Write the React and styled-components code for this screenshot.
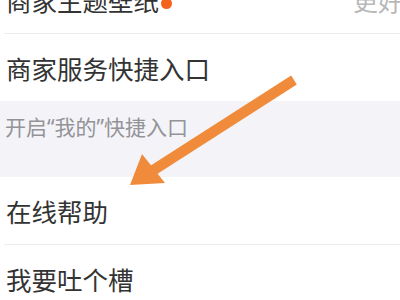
import React from "react";
import styled, { createGlobalStyle } from "styled-components";

const Global = createGlobalStyle`
  html, body { margin: 0; padding: 0; background: #ffffff; overflow: hidden; }
  body { font-family: "Noto Sans", "Noto Sans CJK SC", sans-serif; }
`;

const Screen = styled.div`
  position: relative;
  width: 400px;
  height: 300px;
  overflow: hidden;
  background: #ffffff;
`;

const List = styled.div`
  display: flex;
  flex-direction: column;
  margin-top: -34px;
`;

const Row = styled.div`
  height: 67px;
  display: flex;
  align-items: center;
  justify-content: space-between;
  padding-left: 6px;
  box-sizing: border-box;
`;

const Divider = styled.div`
  height: 1px;
  margin-left: 4px;
  background: #ececec;
`;

const Label = styled.span`
  position: relative;
  font-family: "Noto Sans CJK SC", sans-serif;
  font-size: 25.5px;
  line-height: 30px;
  color: #333333;
  display: inline-flex;
  align-items: center;
`;

const Dot = styled.span`
  position: absolute;
  right: -13px;
  top: 13px;
  width: 11px;
  height: 11px;
  border-radius: 50%;
  background: #f5621e;
`;

const Value = styled.span`
  font-family: "Noto Sans CJK SC", sans-serif;
  font-size: 25px;
  line-height: 30px;
  color: #b8b8b8;
  margin-right: -28px;
  white-space: nowrap;
`;

const Section = styled.div`
  height: 76px;
  background: #f4f4f8;
  padding: 13px 0 0 5px;
  box-sizing: border-box;
`;

const SectionTitle = styled.span`
  font-family: "Noto Sans", "Noto Sans CJK SC", sans-serif;
  font-size: 21px;
  line-height: 26px;
  color: #939398;
`;

const Overlay = styled.svg`
  position: absolute;
  left: 0;
  top: 0;
  pointer-events: none;
`;

export default function App() {
  return (
    <>
      <Global />
      <Screen>
        <List>
          <Row>
            <Label>
              商家主题壁纸
              <Dot />
            </Label>
            <Value>更好玩</Value>
          </Row>
          <Divider />
          <Row>
            <Label>商家服务快捷入口</Label>
          </Row>
          <Section>
            <SectionTitle>开启“我的”快捷入口</SectionTitle>
          </Section>
          <Row>
            <Label>在线帮助</Label>
          </Row>
          <Divider />
          <Row>
            <Label>我要吐个槽</Label>
          </Row>
        </List>
        <Overlay width="400" height="300" viewBox="0 0 400 300">
          <line x1="294" y1="80" x2="152" y2="171" stroke="#f08b3b" strokeWidth="10.5" />
          <polygon points="130,185 142,154 165,183" fill="#f08b3b" />
        </Overlay>
      </Screen>
    </>
  );
}
